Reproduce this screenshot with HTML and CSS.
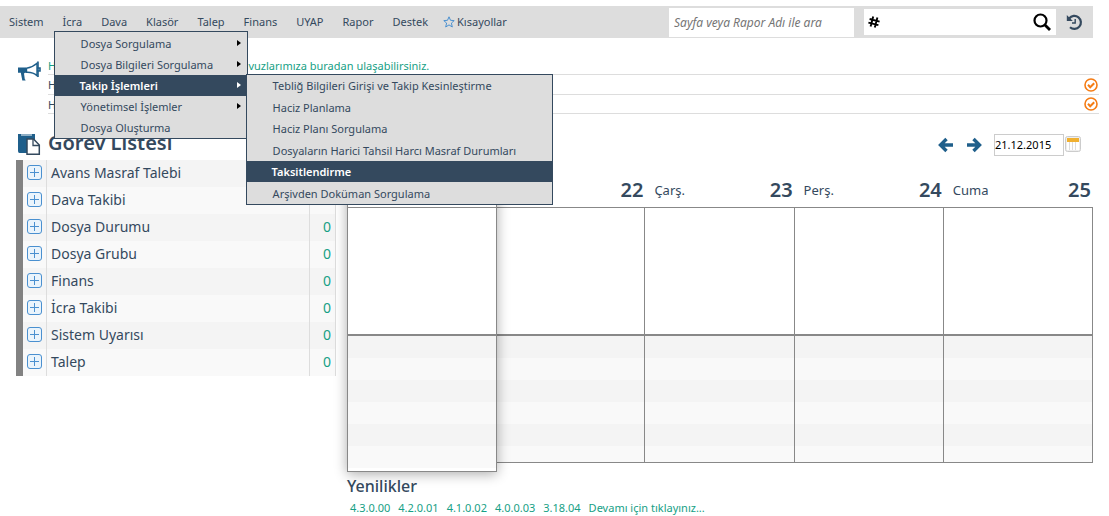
FILE: index.html
```html
<!DOCTYPE html>
<html lang="tr">
<head>
<meta charset="utf-8">
<title>Görev Listesi</title>
<link rel="stylesheet" href="styles.css">
</head>
<body>
<header class="topbar">
  <nav>
    <ul class="menu">
      <li><a href="#">Sistem</a></li>
      <li class="open"><a href="#">İcra</a>
        <ul class="popup">
          <li><a class="parent" href="#">Dosya Sorgulama</a></li>
          <li><a class="parent" href="#">Dosya Bilgileri Sorgulama</a></li>
          <li class="open"><a class="parent active" href="#">Takip İşlemleri</a>
            <ul class="popup sub">
              <li><a href="#">Tebliğ Bilgileri Girişi ve Takip Kesinleştirme</a></li>
              <li><a href="#">Haciz Planlama</a></li>
              <li><a href="#">Haciz Planı Sorgulama</a></li>
              <li><a href="#">Dosyaların Harici Tahsil Harcı Masraf Durumları</a></li>
              <li><a class="active" href="#">Taksitlendirme</a></li>
              <li><a href="#">Arşivden Doküman Sorgulama</a></li>
            </ul>
          </li>
          <li><a class="parent" href="#">Yönetimsel İşlemler</a></li>
          <li><a href="#">Dosya Oluşturma</a></li>
        </ul>
      </li>
      <li><a href="#">Dava</a></li>
      <li><a href="#">Klasör</a></li>
      <li><a href="#">Talep</a></li>
      <li><a href="#">Finans</a></li>
      <li><a href="#">UYAP</a></li>
      <li><a href="#">Rapor</a></li>
      <li><a href="#">Destek</a></li>
      <li><a class="shortcut" href="#"><svg width="12" height="12" viewBox="0 0 12 12"><path d="M6 .8 7.500 4.300l3.700.3-2.800 2.500.9 3.900L6 8.900 2.700 11l.9-3.900L.8 4.600l3.700-.3z" fill="none" stroke="#4a90d0"/></svg>Kısayollar</a></li>
    </ul>
  </nav>
  <div class="tools">
    <input class="page-search" type="text" placeholder="Sayfa veya Rapor Adı ile ara" aria-label="Sayfa veya Rapor Adı ile ara">
    <div class="number-search">
      <svg width="12" height="12" viewBox="0 0 12 12"><path d="M5.200.6 2.600 10.600M9.400 1.600 6.800 11.600M1.600 3l10 2.600M.4 6.600l10 2.600" fill="none" stroke="#000" stroke-width="1.900"/></svg>
      <input type="text" aria-label="Numara ile ara">
      <button type="button" aria-label="Ara"><svg width="18" height="18" viewBox="0 0 18 18"><circle cx="7.500" cy="7.500" r="6" fill="none" stroke="#000" stroke-width="2.200"/><path d="m12 12 5 5" stroke="#000" stroke-width="2.800"/></svg></button>
    </div>
    <button class="history" type="button" aria-label="Geçmiş"><svg width="17" height="17" viewBox="0 0 17 17"><path d="M3.200 4.500A6.500 6.500 0 1 1 4 13.200" fill="none" stroke="#34495e" stroke-width="2.200"/><path d="M.8 1v6h6z" fill="#34495e"/><path d="M9.200 5v4H6" fill="none" stroke="#34495e" stroke-width="1.400"/></svg></button>
  </div>
</header>

<section class="news" aria-label="Duyurular">
  <svg class="horn" width="23" height="20" viewBox="0 0 23 20"><path d="M0 6.500h8v5.200H7l-1 .8.800 5.700q.8.600.8 1.300H4.300L2.800 11.700H0z" fill="#1f5f8b"/><path d="M8.500 7.300Q15 6 19 2.200v12.500Q15 11 8.500 11.300z" fill="#fff" stroke="#1f5f8b" stroke-width="1.400"/><path d="M20 .5v15.500M19 7h3v3h-3" fill="none" stroke="#1f5f8b" stroke-width="1.600"/></svg>
  <ul class="news-list">
    <li><a class="teal" href="#">Hukuk programın ayrıntılı kullanım kılavuzlarımıza buradan ulaşabilirsiniz.</a></li>
    <li><a href="#">Hesap bildirimleri</a><button type="button" aria-label="Okundu"><svg width="14" height="14" viewBox="0 0 14 14"><circle cx="7" cy="7" r="6" fill="none" stroke="#f57c14" stroke-width="1.600"/><path d="m4 6.800 2.200 2.400 4-4" fill="none" stroke="#f57c14" stroke-width="2"/></svg></button></li>
    <li><a href="#">Hatırlatmalar</a><button type="button" aria-label="Okundu"><svg width="14" height="14" viewBox="0 0 14 14"><circle cx="7" cy="7" r="6" fill="none" stroke="#f57c14" stroke-width="1.600"/><path d="m4 6.800 2.200 2.400 4-4" fill="none" stroke="#f57c14" stroke-width="2"/></svg></button></li>
  </ul>
</section>

<main class="content">
  <section class="tasks">
    <h1><svg width="23" height="23" viewBox="0 0 23 23"><path d="M0 1h17v6H9v13H1.500Q0 20 0 18z" fill="#1f5f8b"/><path d="M3 2h11" stroke="#fff"/><path d="M9 6h6.500l5.800 6v9.300H9z" fill="#fff" stroke="#34495e" stroke-width="1.500"/><path d="M15 6v6.500h6" fill="none" stroke="#34495e" stroke-width="1.300"/></svg>Görev Listesi</h1>
    <table class="task-table">
      <tbody>
        <tr><td><button type="button" aria-label="Aç"></button></td><td>Avans Masraf Talebi</td><td>0</td></tr>
        <tr><td><button type="button" aria-label="Aç"></button></td><td>Dava Takibi</td><td>0</td></tr>
        <tr><td><button type="button" aria-label="Aç"></button></td><td>Dosya Durumu</td><td>0</td></tr>
        <tr><td><button type="button" aria-label="Aç"></button></td><td>Dosya Grubu</td><td>0</td></tr>
        <tr><td><button type="button" aria-label="Aç"></button></td><td>Finans</td><td>0</td></tr>
        <tr><td><button type="button" aria-label="Aç"></button></td><td>İcra Takibi</td><td>0</td></tr>
        <tr><td><button type="button" aria-label="Aç"></button></td><td>Sistem Uyarısı</td><td>0</td></tr>
        <tr><td><button type="button" aria-label="Aç"></button></td><td>Talep</td><td>0</td></tr>
      </tbody>
    </table>
  </section>

  <section class="agenda">
    <div class="date-nav">
      <button type="button" aria-label="Önceki"><svg width="16" height="16" viewBox="0 0 16 16"><path d="M15 8H3M8.500 2 2.500 8l6 6" fill="none" stroke="#1f5f8b" stroke-width="3.400"/></svg></button>
      <button type="button" aria-label="Sonraki"><svg width="16" height="16" viewBox="0 0 16 16"><path d="M1 8h12M7.500 2l6 6-6 6" fill="none" stroke="#1f5f8b" stroke-width="3.400"/></svg></button>
      <input type="text" value="21.12.2015" aria-label="Tarih">
      <button class="pick" type="button" aria-label="Takvim"><svg width="16" height="16" viewBox="0 0 16 16"><rect x=".5" y=".5" width="15" height="15" rx="2" fill="#eee" stroke="#ccc"/><path d="M2 2h12v12H2z" fill="#fff"/><path d="M2 2h12v4H2z" fill="#f0b030"/><path d="M4.500 6v8M7.500 6v8M10.500 6v8" stroke="#ddd"/></svg></button>
    </div>
    <div class="week">
      <div class="day today"><h2><span>Pzt.</span><b>21</b></h2><div class="slot"></div><div class="lines"></div></div>
      <div class="day"><h2><span>Salı</span><b>22</b></h2><div class="slot"></div><div class="lines"></div></div>
      <div class="day"><h2><span>Çarş.</span><b>23</b></h2><div class="slot"></div><div class="lines"></div></div>
      <div class="day"><h2><span>Perş.</span><b>24</b></h2><div class="slot"></div><div class="lines"></div></div>
      <div class="day"><h2><span>Cuma</span><b>25</b></h2><div class="slot"></div><div class="lines"></div></div>
    </div>
    <h3>Yenilikler</h3>
    <p class="versions"><a href="#">4.3.0.00</a><a href="#">4.2.0.01</a><a href="#">4.1.0.02</a><a href="#">4.0.0.03</a><a href="#">3.18.04</a><a href="#">Devamı için tıklayınız...</a></p>
  </section>
</main>
</body>
</html>
```
FILE: styles.css
```css
* { box-sizing: border-box; }
body { margin: 0; padding: 6px 16px 0 0; background: #fff; color: #34495e; font: 11px "Noto Sans", sans-serif; }
ul { list-style: none; margin: 0; padding: 0; }
a { color: inherit; text-decoration: none; }
button { border: 0; padding: 0; background: none; display: flex; }
svg { display: block; flex: none; }

.topbar { display: flex; align-items: center; justify-content: space-between; height: 32px; background: #ddd; }
.menu { display: flex; gap: 19px; padding-left: 9px; }
.menu > li { position: relative; line-height: 32px; }
.shortcut { display: flex; align-items: center; gap: 2px; margin-left: -4px; }
.popup { position: absolute; z-index: 2; top: 25px; left: -9px; width: 194px; padding-top: 1px; background: #ddd; border: 1px solid #34495e; line-height: 21px; }
.popup li { position: relative; }
.popup a { display: block; padding-left: 26px; white-space: nowrap; }
.popup a.parent::after { content: ""; position: absolute; right: 6px; top: 7px; border: 3px solid transparent; border-left: 4px solid #000; border-right: 0; }
.popup a.active { background: #34495e; color: #fff; font-weight: 600; padding-left: 25px; }
.popup a.parent.active::after { border-left-color: #fff; }
.sub { top: -1px; left: 191px; width: 307px; min-height: 131px; display: grid; padding: 0; }

.tools { display: flex; align-items: center; }
.tools input { border: 0; outline: 0; background: #fff; font: inherit; }
.page-search { width: 185px; height: 29px; padding: 0 5px; margin-right: 10px; }
.tools .page-search { font-style: italic; font-size: 12px; }
.page-search::placeholder { color: #757575; }
.number-search { display: flex; align-items: center; width: 192px; height: 26px; padding: 0 5px 0 4px; background: #fff; }
.number-search input { flex: 1; min-width: 0; height: 24px; }
.history { margin: 0 10px; }

.news { display: flex; gap: 7px; margin: 18px -6px 0 18px; }
.horn { margin-top: 5px; }
.news-list { flex: 1; }
.news-list li { display: flex; justify-content: space-between; align-items: center; height: 19px; border-bottom: 1px solid #ddd; padding-right: 1px; }
.news-list li:nth-child(2) { height: 20px; }
.news-list .teal { color: #16a085; }

.content { display: flex; gap: 11px; padding-left: 16px; margin-top: 15px; }
.tasks { flex: 0 0 320px; }
h1 { display: flex; align-items: center; gap: 7px; margin: 0; padding-left: 2px; height: 31px; padding-bottom: 4px; font-size: 20px; font-weight: 600; }
h1 svg { margin-top: 3px; }
.task-table { width: 100%; border-collapse: separate; border-spacing: 0; border-left: 7px solid #828282; font-size: 14px; }
.task-table tr { background: #f4f4f4; }
.task-table tr:nth-child(even) { background: #f9f9f9; }
.task-table td { height: 27px; padding: 0 4px 2px; line-height: 20px; border-right: 1px solid #ddd; }
.task-table td:first-child { width: 24px; }
.task-table td:last-child { width: 26px; color: #16a085; text-align: right; }
.task-table button { width: 15px; height: 15px; border: 1px solid #4a90d0; border-radius: 3px; background: linear-gradient(#4a90d0, #4a90d0) no-repeat center / 9px 1px, linear-gradient(#4a90d0, #4a90d0) no-repeat center / 1px 9px, #eaf4fc; }

.agenda { flex: 1; min-width: 0; }
.date-nav { display: flex; align-items: center; justify-content: flex-end; height: 31px; padding-right: 12px; }
.date-nav button { margin-right: 12px; }
.date-nav input { width: 70px; height: 22px; padding: 0; border: 1px solid #ccc; color: #000; font: inherit; }
.date-nav .pick { margin: 0 0 2px 1px; }
.week { display: grid; grid-template-columns: repeat(5, 1fr); align-items: start; padding-top: 12px; }
.day h2 { display: flex; align-items: center; justify-content: space-between; height: 36px; margin: 0; padding: 0 2px 0 9px; font-size: 13px; font-weight: 400; border-bottom: 1px solid #888; }
.day b { font-size: 20px; font-weight: 600; }
.slot { height: 126px; border-right: 1px solid #888; }
.lines { height: 129px; border: solid #888; border-width: 2px 1px 1px 0; background: repeating-linear-gradient(#f4f4f4 0 22px, #f9f9f9 22px 44px); }
.today { position: relative; z-index: 1; margin-right: -1px; border: solid #888; border-width: 0 1px 1px; box-shadow: 0 2px 12px #0005; background: #fff; }
.today .slot { border: 0; }
.today .lines { height: 134px; margin-bottom: 3px; border-width: 2px 0 0; }
h3 { margin: 3px 0 0; font-size: 16px; line-height: 22px; font-weight: 500; }
.versions { display: flex; gap: 8px; margin: 4px 0 0; padding-left: 3px; line-height: 14px; color: #16a085; }
```
